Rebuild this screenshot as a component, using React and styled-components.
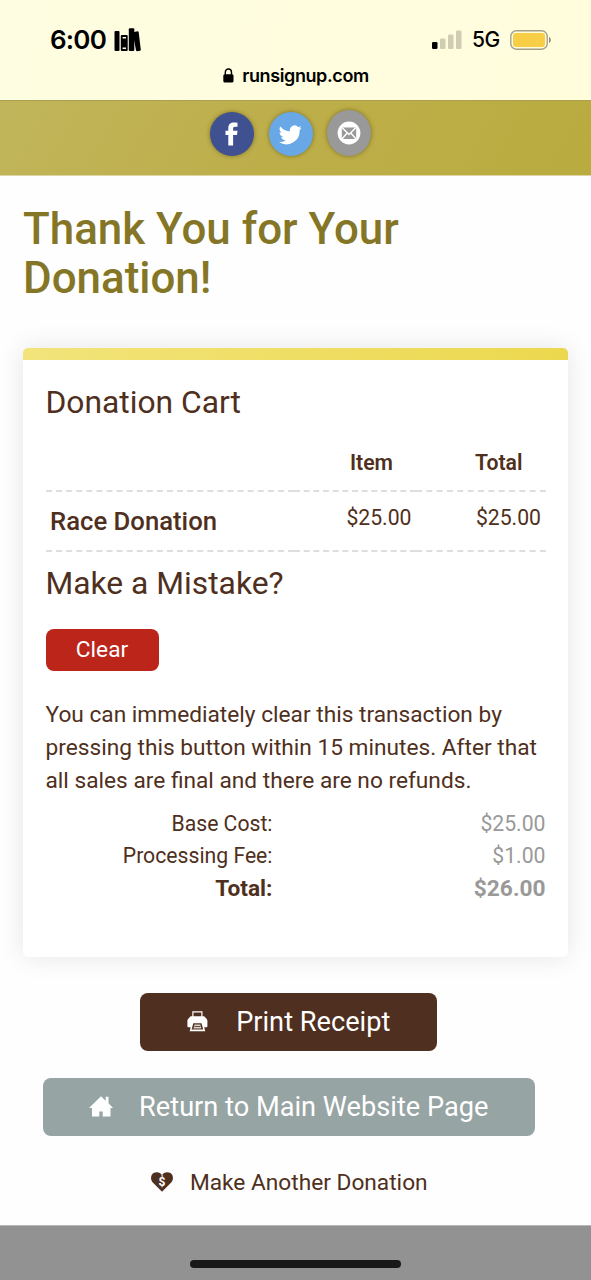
import React from "react";
import styled, { createGlobalStyle } from "styled-components";

const brown = "#4f2f20";

const Global = createGlobalStyle`
  *, *::before, *::after { box-sizing: border-box; }
  body { margin: 0; background: #fff; color: ${brown}; font-family: Roboto, "Liberation Sans", sans-serif; }
  h1, h2, p { margin: 0; }
  svg { display: block; flex: none; }
`;

const Screen = styled.div`
  width: 591px;
  height: 1280px;
  display: flex;
  flex-direction: column;
  overflow: hidden;
  background: #fefefe;
`;

const BrowserTop = styled.header`
  height: 101px;
  flex: none;
  background: linear-gradient(100deg, #fffde1, #fffddc);
  border-bottom: 1px solid #aaa04f;
  color: #000;
  font-family: Inter, sans-serif;
`;

const StatusBar = styled.div`
  display: flex;
  justify-content: space-between;
  align-items: center;
  height: 65px;
  padding: 14px 39px 0 50px;
`;

const StatusGroup = styled.div`
  display: flex;
  align-items: center;
  gap: ${(p) => p.$gap}px;
`;

const Clock = styled.span`
  font-size: 26px;
  line-height: 30px;
  font-weight: 600;
  letter-spacing: -0.8px;
`;

const Network = styled.span`
  font-size: 21px;
  line-height: 26px;
  font-weight: 500;
  letter-spacing: -0.3px;
`;

const AddressBar = styled.div`
  display: flex;
  align-items: center;
  justify-content: center;
  gap: 8px;
  height: 20px;
  font-size: 18px;
  font-weight: 600;
  letter-spacing: -0.4px;
  padding-left: 1px;
`;

const SocialBar = styled.nav`
  height: 75px;
  flex: none;
  display: flex;
  justify-content: center;
  align-items: flex-end;
  padding: 0 10px 19px 0;
  gap: 14.5px;
  background: linear-gradient(120deg, #c1b55b, #bdae49 50%, #baab3f);
  border-bottom: 1px solid #ddd6a4;
`;

const SocialButton = styled.a`
  width: 44px;
  height: ${(p) => p.$height || 44}px;
  border-radius: 50%;
  display: grid;
  place-items: center;
  background: ${(p) => p.$color};
  box-shadow: 0 0 4px rgba(60, 50, 0, 0.5);
`;

const Main = styled.main`
  flex: 1;
  padding: 29px 23px 0;
`;

const Title = styled.h1`
  font-size: 43.9px;
  line-height: 49px;
  font-weight: 500;
  color: #847626;
`;

const Card = styled.section`
  margin-top: 45px;
  height: 609px;
  border-radius: 5px;
  overflow: hidden;
  background: #fff;
  box-shadow: 0 0 26px rgba(0, 0, 0, 0.1);
`;

const CardStripe = styled.div`
  height: 12px;
  background: linear-gradient(100deg, #f2e47b, #ecd84e);
`;

const CardBody = styled.div`
  padding: 23px 22.5px 0;
`;

const SectionTitle = styled.h2`
  font-size: 31.8px;
  line-height: 38px;
  font-weight: 400;
`;

const CartTable = styled.div`
  margin: 20px 0 12px;
`;

const CartRow = styled.div`
  display: grid;
  grid-template-columns: 248.5px 122px 129.5px;
  height: ${(p) => p.$height}px;
  font-size: 21.2px;
  line-height: 26px;
`;

const Cell = styled.div`
  padding: 13px 4.5px 0;
  border-bottom: 2px dashed #dedede;
  text-align: right;
`;

const HeadCell = styled(Cell)`
  padding: 9px 23px 0 0;
  font-weight: 600;
`;

const ItemName = styled(Cell)`
  padding-top: 14px;
  text-align: left;
  font-size: 25.7px;
  line-height: 30px;
  font-weight: 500;
`;

const ClearButton = styled.button`
  display: block;
  width: 113px;
  height: 42px;
  margin-top: 27px;
  padding: 0;
  border: 0;
  border-radius: 8px;
  background: #bc251a;
  color: #fff;
  font: 400 22.7px/42px Roboto, sans-serif;
`;

const Notice = styled.p`
  margin-top: 27px;
  font-size: 22.7px;
  line-height: 33.2px;
  white-space: nowrap;
`;

const Totals = styled.div`
  margin-top: 10px;
`;

const TotalRow = styled.div`
  display: grid;
  grid-template-columns: 227px 1fr;
  text-align: right;
  font-size: ${(p) => (p.$strong ? 22.7 : 21.2)}px;
  font-weight: ${(p) => (p.$strong ? 700 : 400)};
  line-height: ${(p) => (p.$strong ? 34 : 32.3)}px;
`;

const Amount = styled.span`
  color: #999;
`;

const Actions = styled.div`
  display: flex;
  flex-direction: column;
  align-items: center;
  padding: 36px 13.500px 0 0;
`;

const ActionButton = styled.a`
  display: flex;
  align-items: center;
  justify-content: center;
  gap: ${(p) => p.$gap}px;
  width: ${(p) => p.$width}px;
  height: 58px;
  margin-bottom: 27px;
  border-radius: 8px;
  background: ${(p) => p.$color};
  color: #fff;
  font-size: 27.2px;
  white-space: nowrap;
`;

const ButtonIcon = styled.span`
  margin-bottom: 2px;
`;

const TextLink = styled.a`
  display: flex;
  align-items: center;
  gap: 17px;
  padding: 1px 0 0 1px;
  font-size: 22.7px;
  line-height: 38px;
`;

const BottomBar = styled.footer`
  height: 55px;
  flex: none;
  display: flex;
  justify-content: center;
  padding-top: 34px;
  background: #929292;
  border-top: 1px solid #b8b8b8;
`;

const HomeIndicator = styled.div`
  width: 211px;
  height: 8px;
  border-radius: 4px;
  background: #191919;
`;

const Books = () => (
  <svg width="27" height="24" viewBox="0 0 27 24">
    <rect x="0.5" y="3" width="5" height="20" rx="1" />
    <rect x="6.8" y="7" width="6.9" height="16" rx="1" />
    <path d="M8.6 9h3.4v1.6H8.6zM8.6 19.5h3.4v1.6H8.6z" fill="#fffde0" />
    <rect x="14.8" y="0.3" width="5.5" height="22.7" rx="1" />
    <path d="M20 4l3.5-.8q1 0 1.200 1l2.100 17.500q0 1-.8 1.100l-2.800.4q-1 0-1.200-1L20 12z" />
  </svg>
);

const Signal = () => (
  <svg width="30" height="20" viewBox="0 0 30 20">
    <rect x="0" y="12" width="5.5" height="7" rx="1.3" />
    <g fill="#cfcdb4">
      <rect x="8" y="8.5" width="5.5" height="10.5" rx="1.3" />
      <rect x="16" y="4.5" width="5.5" height="14.5" rx="1.3" />
      <rect x="24" y="0.5" width="5.5" height="18.5" rx="1.3" />
    </g>
  </svg>
);

const Battery = () => (
  <svg width="42" height="20" viewBox="0 0 42 20">
    <rect x="0.8" y="0.8" width="36.4" height="18.4" rx="5.5" fill="none" stroke="#a09f89" strokeWidth="1.4" />
    <rect x="3" y="3" width="32" height="14" rx="3" fill="#f7ce45" />
    <path d="M39 7c2.4 1 2.4 5 0 6z" fill="#8f8e7b" />
  </svg>
);

const Lock = () => (
  <svg width="11" height="15" viewBox="0 0 11 15">
    <rect x="0.3" y="6.2" width="10.2" height="8.3" rx="1.5" />
    <path d="M2.3 7V4.2C2.3 0 8.5 0 8.5 4.2V7" fill="none" stroke="#000" strokeWidth="1.4" />
  </svg>
);

const Facebook = () => (
  <svg width="14" height="24" viewBox="0 0 14 24">
    <path d="M3.3 23.5V13H.5V8.7h2.8V6C3.3 2.3 5.6.5 9 .5c1.5 0 3 .1 3.5.3v4H10.200C8.500 4.800 8.100 5.500 8.100 6.700v2h4.400L12 13H8.100v10.500z" fill="#fff" />
  </svg>
);

const Twitter = () => (
  <svg width="23" height="23" viewBox="0 0 24 24">
    <path fill="#fff" d="M23.6 4.9a9.7 9.7 0 0 1-2.8.8 4.9 4.9 0 0 0 2.2-2.7 9.8 9.8 0 0 1-3.1 1.2 4.9 4.9 0 0 0-8.4 4.5A13.9 13.9 0 0 1 1.4 3.6a4.9 4.9 0 0 0 1.5 6.5 4.9 4.9 0 0 1-2.2-.6 4.9 4.9 0 0 0 3.9 4.9 4.9 4.9 0 0 1-2.2.1 4.9 4.9 0 0 0 4.6 3.4A9.9 9.9 0 0 1 0 19.9 13.9 13.9 0 0 0 21.5 7.5a10 10 0 0 0 2.1-2.6z" />
  </svg>
);

const Mail = () => (
  <svg width="24" height="24" viewBox="0 0 24 24">
    <circle cx="12" cy="12" r="11.4" fill="#fff" />
    <rect x="4.8" y="6.5" width="14.4" height="11.5" fill="#999" />
    <path d="M4.5 6l7.5 7.5 7.5-7.5M4.5 18.5l5.7-6.5M19.5 18.5l-5.7-6.5" fill="none" stroke="#fff" strokeWidth="1.4" />
  </svg>
);

const Printer = () => (
  <svg width="21" height="21" viewBox="0 0 21 21">
    <path d="M5.9 6V.9h9V6" fill="none" stroke="#fff" strokeWidth="1.2" />
    <path d="M3.6 5.3h13.6l2.3 2.5q.9 1 .9 2v5.500q0 1-1 1h-2.200l1 3.900H2.700l1-3.900H1.400q-1 0-1-1V9.800q0-1 .9-2z" fill="#fff" />
    <path d="M6.300 12.200h8.200l1.700 6.400H4.600z" fill={brown} />
    <path d="M7.500 13.400h5.800l1 4.200H6.500z" fill="#d9d0cb" />
    <path d="M7.400 15.500h6" stroke={brown} strokeWidth="0.8" />
  </svg>
);

const House = () => (
  <svg width="24" height="21" viewBox="0 0 24 21">
    <path d="M12 .3l4.7 4.4V.8h2.8v6.5L24 12h-2.5v8.5h-7.8v-5h-3.4v5H3V12H0z" fill="#fff" />
  </svg>
);

const HeartWrap = styled.span`
  position: relative;
  width: 22px;
  height: 20px;
  margin-bottom: 3px;
`;

const HeartDollar = styled.span`
  position: absolute;
  inset: 0;
  color: #fff;
  text-align: center;
  font-size: 12px;
  line-height: 21px;
  font-weight: 700;
`;

const Heart = () => (
  <HeartWrap>
    <svg width="22" height="20" viewBox="0 0 22 20">
      <path d="M11 19.8L1.8 10.6C-1 7.500-.2 2.900 2.500 1.100 5.500-.7 9.500.1 11 3.200 12.500.1 16.500-.7 19.500 1.100c2.700 1.800 3.500 6.400.7 9.500z" fill={brown} />
    </svg>
    <HeartDollar>$</HeartDollar>
  </HeartWrap>
);

export default function App() {
  return (
    <Screen>
      <Global />
      <BrowserTop>
        <StatusBar>
          <StatusGroup $gap={8}>
            <Clock>6:00</Clock>
            <Books />
          </StatusGroup>
          <StatusGroup $gap={10}>
            <Signal />
            <Network>5G</Network>
            <Battery />
          </StatusGroup>
        </StatusBar>
        <AddressBar>
          <Lock />
          <span>runsignup.com</span>
        </AddressBar>
      </BrowserTop>
      <SocialBar>
        <SocialButton $color="#3f5190"><Facebook /></SocialButton>
        <SocialButton $color="#68a8e6"><Twitter /></SocialButton>
        <SocialButton $color="#999999" $height={46}><Mail /></SocialButton>
      </SocialBar>
      <Main>
        <Title>Thank You for Your<br />Donation!</Title>
        <Card>
          <CardStripe />
          <CardBody>
            <SectionTitle>Donation Cart</SectionTitle>
            <CartTable>
              <CartRow $height={51}>
                <HeadCell />
                <HeadCell>Item</HeadCell>
                <HeadCell>Total</HeadCell>
              </CartRow>
              <CartRow $height={60}>
                <ItemName>Race Donation</ItemName>
                <Cell>$25.00</Cell>
                <Cell>$25.00</Cell>
              </CartRow>
            </CartTable>
            <SectionTitle>Make a Mistake?</SectionTitle>
            <ClearButton>Clear</ClearButton>
            <Notice>
              You can immediately clear this transaction by<br />
              pressing this button within 15 minutes. After that<br />
              all sales are final and there are no refunds.
            </Notice>
            <Totals>
              <TotalRow><span>Base Cost:</span><Amount>$25.00</Amount></TotalRow>
              <TotalRow><span>Processing Fee:</span><Amount>$1.00</Amount></TotalRow>
              <TotalRow $strong><span>Total:</span><Amount>$26.00</Amount></TotalRow>
            </Totals>
          </CardBody>
        </Card>
        <Actions>
          <ActionButton $width={297} $gap={28} $color={brown}>
            <ButtonIcon><Printer /></ButtonIcon>Print Receipt
          </ActionButton>
          <ActionButton $width={492} $gap={26} $color="#97a4a4">
            <ButtonIcon><House /></ButtonIcon>Return to Main Website Page
          </ActionButton>
          <TextLink><Heart />Make Another Donation</TextLink>
        </Actions>
      </Main>
      <BottomBar><HomeIndicator /></BottomBar>
    </Screen>
  );
}
